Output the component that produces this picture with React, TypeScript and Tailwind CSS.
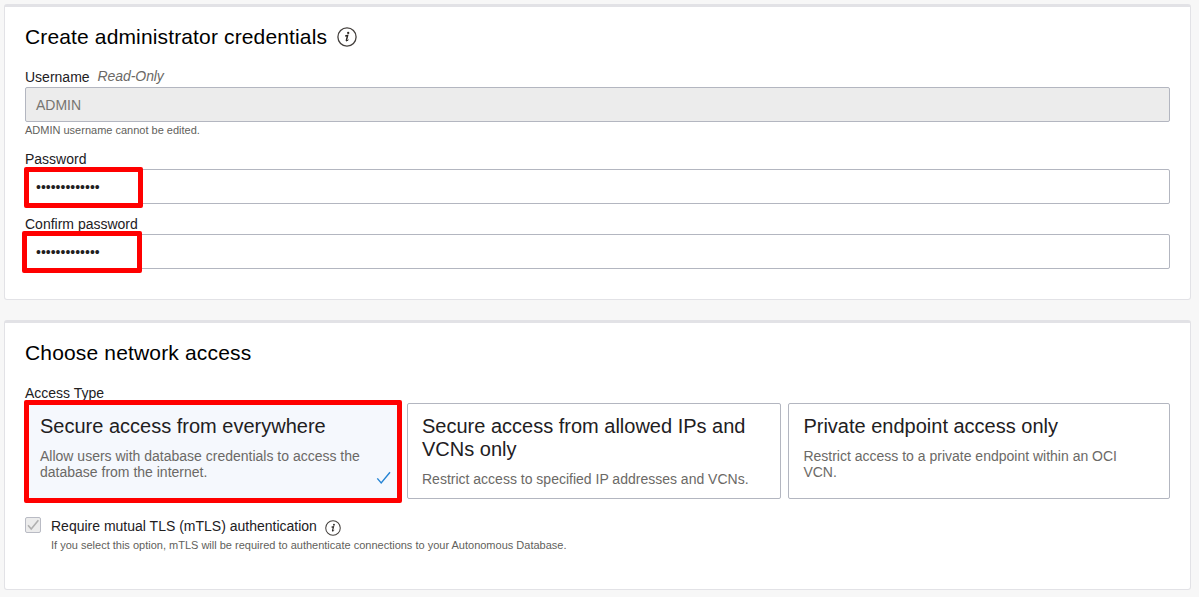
import type { ReactNode } from "react";

function InfoIcon({ className }: { className: string }) {
  return (
    <svg viewBox="0 0 20 20" className={className} fill="none" aria-hidden="true">
      <circle cx="10" cy="10" r="9.1" stroke="#45413e" strokeWidth="1.3" />
      <circle cx="11.2" cy="5.9" r="1.15" fill="#2b2724" />
      <path d="M8.2 8.9 L10.6 8.5 L9.3 13.9" stroke="#2b2724" strokeWidth="1.5" />
      <path d="M9 13.9 Q9.8 14.2 11.5 12.8" stroke="#2b2724" strokeWidth="1" />
    </svg>
  );
}

function Check({ className, width }: { className: string; width: number }) {
  return (
    <svg viewBox="0 0 16 14" className={className} fill="none" aria-hidden="true">
      <path d="M1.3 7.4 L5.2 12 L14 1.2" stroke="currentColor" strokeWidth={width} />
    </svg>
  );
}

function Panel({ className, children }: { className: string; children: ReactNode }) {
  return (
    <section
      className={`box-border w-[1187px] rounded-[3px] border border-t-[3px] border-[#e2e2e6] bg-white px-5 pt-[19px] ${className}`}
    >
      {children}
    </section>
  );
}

function Highlight({ className }: { className: string }) {
  return <div className={`pointer-events-none absolute rounded-[2px] border-5 border-[#ff0000] ${className}`} />;
}

function PasswordField({ label, mark, className }: { label: string; mark: string; className: string }) {
  return (
    <div className={className}>
      <div className="text-sm leading-4">{label}</div>
      <div className="relative mt-0.5 flex h-[35px] items-center rounded-[2px] border border-[#b3b6c0] px-2.5 text-sm">
        •••••••••••••
        <Highlight className={mark} />
      </div>
    </div>
  );
}

interface OptionProps {
  title: string;
  text: string;
  className: string;
  children?: ReactNode;
}

function AccessOption({ title, text, className, children }: OptionProps) {
  return (
    <div className={`relative h-24 rounded-[2px] border border-[#b3b6c0] pt-[11px] ${className}`}>
      <div className="text-[20px] leading-[23px]">{title}</div>
      <div className="mt-2.5 text-sm leading-4 text-[#6b6966]">{text}</div>
      {children}
    </div>
  );
}

export default function App() {
  return (
    <main className="h-[597px] overflow-hidden bg-[#f7f7f7] pt-1 pl-1 font-['Liberation_Sans',Arial,sans-serif] text-[#22201e]">
      <Panel className="h-[296px]">
        <div className="flex h-[22px] items-center">
          <h2 className="text-[21px] leading-[22px] tracking-[0.14px] text-black">Create administrator credentials</h2>
          <InfoIcon className="ml-2.5 size-5" />
        </div>
        <div className="mt-[21px] flex gap-2 text-sm leading-4">
          <span>Username</span>
          <span className="-mt-px tracking-[-0.08px] text-[#6b6966] italic">Read-Only</span>
        </div>
        <div className="mt-0.5 flex h-[35px] items-center rounded-[2px] border border-[#b3b6c0] bg-[#ececec] px-2.5 text-sm text-[#777571]">
          ADMIN
        </div>
        <div className="mt-0.5 text-[11px] leading-[13px] text-[#625f5c]">ADMIN username cannot be edited.</div>
        <PasswordField label="Password" className="mt-3.5" mark="-top-[3px] -left-[2px] h-[41px] w-[119px]" />
        <PasswordField label="Confirm password" className="mt-3" mark="-top-[4px] -left-[4px] h-[42px] w-[120px]" />
      </Panel>

      <Panel className="mt-5 h-[270px]">
        <h2 className="text-[21px] leading-[22px] tracking-[0.16px] text-black">Choose network access</h2>
        <div className="mt-[21px] text-sm leading-4">Access Type</div>
        <div className="mt-0.5 flex gap-[7px]">
          <AccessOption
            title="Secure access from everywhere"
            text="Allow users with database credentials to access the database from the internet."
            className="w-[375px] bg-[#f5f8fd] pr-8 pl-3.5"
          >
            <Check className="absolute right-[7px] bottom-[13px] h-3.5 w-4 text-[#2584d4]" width={1.4} />
            <Highlight className="-top-[4px] -left-[2px] h-[103px] w-[378px]" />
          </AccessOption>
          <AccessOption
            title="Secure access from allowed IPs and VCNs only"
            text="Restrict access to specified IP addresses and VCNs."
            className="w-[374px] pr-6 pl-3.5"
          />
          <AccessOption
            title="Private endpoint access only"
            text="Restrict access to a private endpoint within an OCI VCN."
            className="flex-1 pr-8 pl-[14.4px]"
          />
        </div>
        <div className="mt-[18px] flex gap-2.5">
          <div className="flex size-4 items-center justify-center rounded-[2px] border border-[#b9bbc4] bg-[#ececec]">
            <Check className="h-3 w-[13px] text-[#b0b0b0]" width={2} />
          </div>
          <div>
            <div className="flex h-[18px] items-center text-sm leading-[18px]">
              <span>Require mutual TLS (mTLS) authentication</span>
              <InfoIcon className="mt-[3px] ml-2 size-4" />
            </div>
            <div className="mt-1 text-[11px] leading-[13px] text-[#625f5c]">
              If you select this option, mTLS will be required to authenticate connections to your Autonomous Database.
            </div>
          </div>
        </div>
      </Panel>
    </main>
  );
}
